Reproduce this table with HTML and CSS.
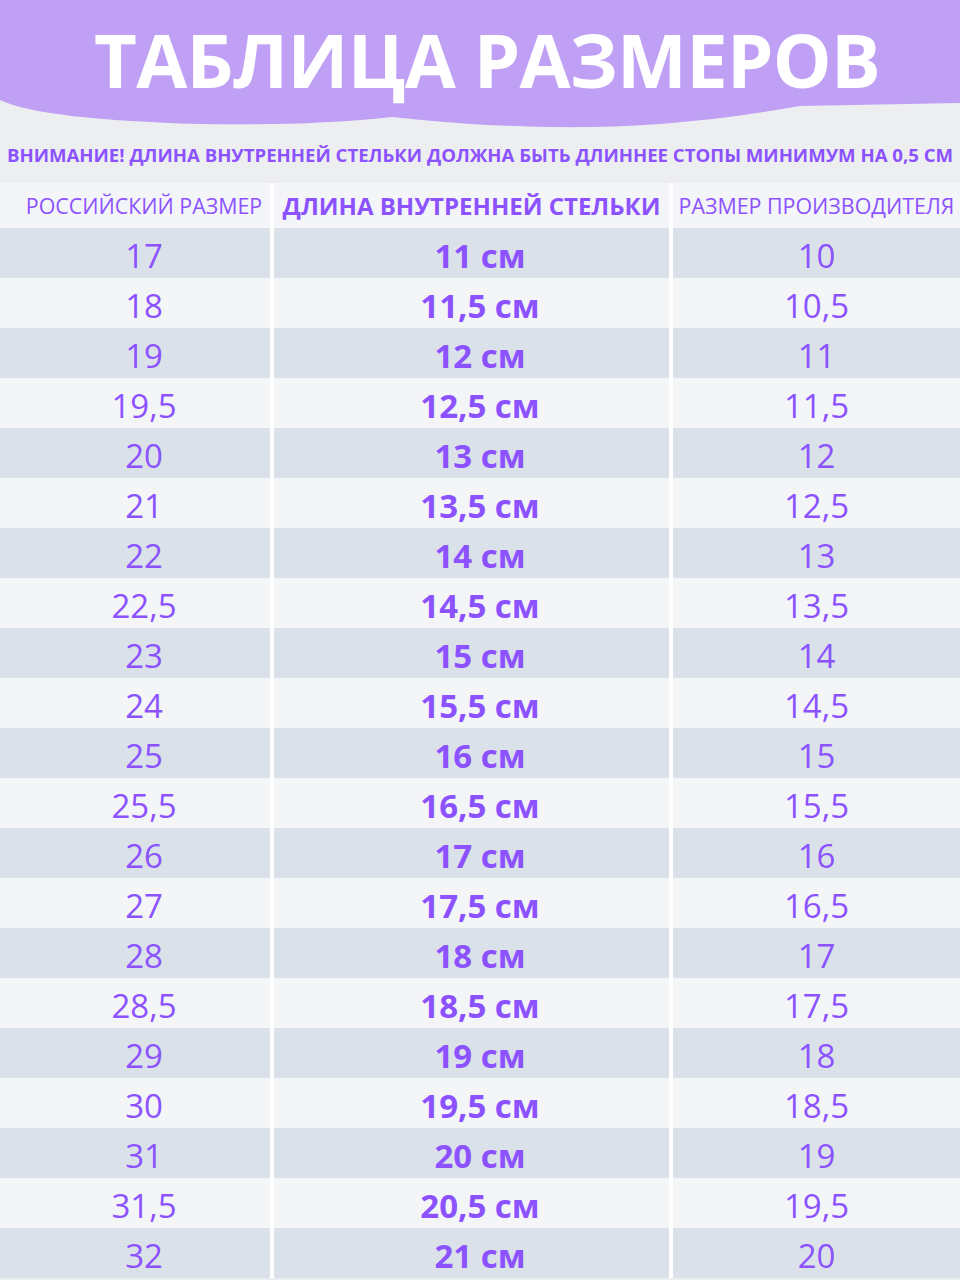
FILE: index.html
```html
<!DOCTYPE html>
<html lang="ru">
<head>
<meta charset="utf-8">
<link rel="stylesheet" href="styles.css">
</head>
<body>
<div class="page">
  <header class="hero">
    <svg class="wave" viewBox="0 0 960 130" preserveAspectRatio="none" aria-hidden="true">
      <path d="M0,0 H960 V103 L800,106 C700,124 620,128 550,127 C480,126 430,121 392,117 C330,124 260,125 200,124 C100,121 30,114 0,100 Z" fill="#BFA0F5"/>
    </svg>
    <h1 class="title">ТАБЛИЦА РАЗМЕРОВ</h1>
  </header>
  <p class="notice">ВНИМАНИЕ! ДЛИНА ВНУТРЕННЕЙ СТЕЛЬКИ ДОЛЖНА БЫТЬ ДЛИННЕЕ СТОПЫ МИНИМУМ НА 0,5 СМ</p>
  <div class="table" id="table">
    <div class="cell head c1">РОССИЙСКИЙ РАЗМЕР</div>
    <div class="cell head c2">ДЛИНА ВНУТРЕННЕЙ СТЕЛЬКИ</div>
    <div class="cell head c3">РАЗМЕР ПРОИЗВОДИТЕЛЯ</div>

    <div class="cell dark c1">17</div><div class="cell dark bold">11 см</div><div class="cell dark">10</div>
    <div class="cell light c1">18</div><div class="cell light bold">11,5 см</div><div class="cell light">10,5</div>
    <div class="cell dark c1">19</div><div class="cell dark bold">12 см</div><div class="cell dark">11</div>
    <div class="cell light c1">19,5</div><div class="cell light bold">12,5 см</div><div class="cell light">11,5</div>
    <div class="cell dark c1">20</div><div class="cell dark bold">13 см</div><div class="cell dark">12</div>
    <div class="cell light c1">21</div><div class="cell light bold">13,5 см</div><div class="cell light">12,5</div>
    <div class="cell dark c1">22</div><div class="cell dark bold">14 см</div><div class="cell dark">13</div>
    <div class="cell light c1">22,5</div><div class="cell light bold">14,5 см</div><div class="cell light">13,5</div>
    <div class="cell dark c1">23</div><div class="cell dark bold">15 см</div><div class="cell dark">14</div>
    <div class="cell light c1">24</div><div class="cell light bold">15,5 см</div><div class="cell light">14,5</div>
    <div class="cell dark c1">25</div><div class="cell dark bold">16 см</div><div class="cell dark">15</div>
    <div class="cell light c1">25,5</div><div class="cell light bold">16,5 см</div><div class="cell light">15,5</div>
    <div class="cell dark c1">26</div><div class="cell dark bold">17 см</div><div class="cell dark">16</div>
    <div class="cell light c1">27</div><div class="cell light bold">17,5 см</div><div class="cell light">16,5</div>
    <div class="cell dark c1">28</div><div class="cell dark bold">18 см</div><div class="cell dark">17</div>
    <div class="cell light c1">28,5</div><div class="cell light bold">18,5 см</div><div class="cell light">17,5</div>
    <div class="cell dark c1">29</div><div class="cell dark bold">19 см</div><div class="cell dark">18</div>
    <div class="cell light c1">30</div><div class="cell light bold">19,5 см</div><div class="cell light">18,5</div>
    <div class="cell dark c1">31</div><div class="cell dark bold">20 см</div><div class="cell dark">19</div>
    <div class="cell light c1">31,5</div><div class="cell light bold">20,5 см</div><div class="cell light">19,5</div>
    <div class="cell dark c1">32</div><div class="cell dark bold">21 см</div><div class="cell dark">20</div>
  </div>
</div>
</body>
</html>
```

FILE: styles.css
```css
html, body {
  margin: 0;
  padding: 0;
  background: #EDEEF0;
}
.page {
  width: 960px;
  height: 1280px;
  overflow: hidden;
  font-family: "Open Sans", "Liberation Sans", sans-serif;
  color: #8C52FF;
}
.hero {
  position: relative;
  height: 130px;
}
.wave {
  position: absolute;
  left: 0;
  top: 0;
  width: 960px;
  height: 130px;
  display: block;
}
.title {
  position: relative;
  margin: 0;
  padding-top: 14px;
  padding-left: 14px;
  text-align: center;
  color: #FFFFFF;
  font-size: 74px;
  font-weight: 700;
  line-height: 92px;
  letter-spacing: -0.7px;
}
.notice {
  margin: 0;
  height: 53px;
  box-sizing: border-box;
  padding-top: 13px;
  text-align: center;
  font-size: 18.6px;
  font-weight: 700;
  line-height: 24px;
  white-space: nowrap;
}
.table {
  display: grid;
  grid-template-columns: 270px 395px 1fr;
  column-gap: 4px;
  background: #FFFFFF;
}
.cell {
  height: 50px;
  display: flex;
  align-items: center;
  justify-content: center;
  padding-top: 5px;
  box-sizing: border-box;
  font-size: 33px;
  font-weight: 400;
  white-space: nowrap;
}
.cell.c1 {
  padding-left: 18px;
}
.cell.bold {
  padding-left: 17px;
  font-weight: 700;
}
.cell.head {
  height: 45px;
  padding-top: 0;
  background: #F3F5F8;
  font-size: 21.4px;
}
.cell.head.c2 {
  font-size: 24px;
  font-weight: 700;
}
.dark { background: #DAE1E8; }
.light { background: #F3F5F7; }
```
